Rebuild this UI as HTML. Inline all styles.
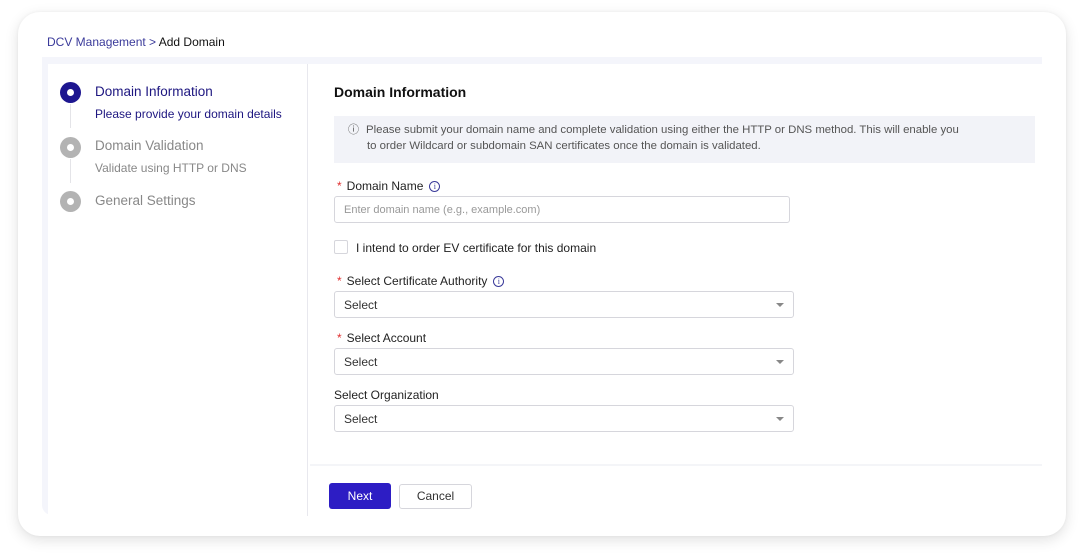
<!DOCTYPE html>
<html><head><meta charset="utf-8"><style>
*{box-sizing:border-box;margin:0;padding:0}
body{width:1084px;height:560px;background:#fff;font-family:"Liberation Sans",sans-serif;position:relative;overflow:hidden;color:#222}
.card{position:absolute;left:18px;top:12px;width:1048px;height:524px;background:#fff;border-radius:22px;box-shadow:0 4px 14px rgba(0,0,0,0.12),0 0 3px rgba(0,0,0,0.05)}
.abs{position:absolute}
.bc{left:47px;top:35px;font-size:12px;color:#3a3a9a}
.bc b{font-weight:normal;color:#111}
.panel{left:42px;top:57px;width:1000px;height:458px;background:#f4f5fb;border-radius:0 0 0 10px}
.leftw{left:48px;top:64px;width:259px;height:452px;background:#fff}
.right{left:308px;top:64px;width:734px;height:452px;background:#fff}
.vline{left:307px;top:64px;width:1px;height:452px;background:#e8e8ee}
.dot{width:21px;height:21px;border-radius:50%;}
.dot::after{content:"";position:absolute;left:7px;top:7px;width:7px;height:7px;border-radius:50%;background:#fff}
.t1{font-size:13.5px}
.t2{font-size:12px}
.lbl{font-size:12px;color:#222}
.lbl i{color:#e03030;font-style:normal;margin-right:5px}
.info{display:inline-block;width:11px;height:11px;border:1px solid #3a3a9a;border-radius:50%;font-size:8px;color:#3a3a9a;text-align:center;line-height:10px;margin-left:6px;vertical-align:1px;font-family:"Liberation Serif",serif}
.inp{width:456px;height:27px;border:1px solid #d6d6dc;border-radius:3px;background:#fff;font-size:12px;color:#333;padding:6px 9px}
.arrow{position:absolute;right:9px;top:11px;border-left:4px solid transparent;border-right:4px solid transparent;border-top:4px solid #888}
</style></head><body>
<div class="card"></div>
<div class="abs bc">DCV Management &gt; <b>Add Domain</b></div>
<div class="abs panel"></div>
<div class="abs leftw"></div>
<div class="abs right"></div>
<div class="abs vline"></div>

<div class="abs dot" style="left:60px;top:82px;background:#1d1690"></div>
<div class="abs" style="left:70px;top:104px;width:1px;height:24px;background:#e4e4e8"></div>
<div class="abs dot" style="left:60px;top:137px;background:#b3b3b3"></div>
<div class="abs" style="left:70px;top:159px;width:1px;height:24px;background:#e4e4e8"></div>
<div class="abs dot" style="left:60px;top:191px;background:#b3b3b3"></div>
<div class="abs t1" style="left:95px;top:84px;color:#1d1680">Domain Information</div>
<div class="abs t2" style="left:95px;top:107px;color:#1d1680">Please provide your domain details</div>
<div class="abs t1" style="left:95px;top:138px;color:#888">Domain Validation</div>
<div class="abs t2" style="left:95px;top:161px;color:#888">Validate using HTTP or DNS</div>
<div class="abs t1" style="left:95px;top:193px;color:#888">General Settings</div>

<div class="abs" style="left:334px;top:84px;font-size:14px;font-weight:bold;color:#111">Domain Information</div>
<div class="abs" style="left:334px;top:116px;width:701px;height:47px;background:#f2f3f8;font-size:11.4px;color:#555;padding:7px 0 0 14px;line-height:15.5px">
<span style="font-size:11px;margin-right:7px">ⓘ</span>Please submit your domain name and complete validation using either the HTTP or DNS method. This will enable you<br><span style="padding-left:19px">to order Wildcard or subdomain SAN certificates once the domain is validated.</span></div>

<div class="abs lbl" style="left:337px;top:179px"><i>*</i>Domain Name<span class="info">i</span></div>
<div class="abs inp" style="left:334px;top:196px;color:#999;font-size:11px;padding-top:7px">Enter domain name (e.g., example.com)</div>

<div class="abs" style="left:334px;top:240px;width:14px;height:14px;border:1px solid #d6d6dc;border-radius:2px;background:#fff"></div>
<div class="abs lbl" style="left:356px;top:241px">I intend to order EV certificate for this domain</div>

<div class="abs lbl" style="left:337px;top:274px"><i>*</i>Select Certificate Authority<span class="info">i</span></div>
<div class="abs inp" style="left:334px;top:291px;width:460px">Select<span class="arrow"></span></div>
<div class="abs lbl" style="left:337px;top:331px"><i>*</i>Select Account</div>
<div class="abs inp" style="left:334px;top:348px;width:460px">Select<span class="arrow"></span></div>
<div class="abs lbl" style="left:334px;top:388px">Select Organization</div>
<div class="abs inp" style="left:334px;top:405px;width:460px">Select<span class="arrow"></span></div>

<div class="abs" style="left:310px;top:464px;width:732px;height:2px;background:#f4f5f8"></div>
<div class="abs" style="left:329px;top:483px;width:62px;height:26px;background:#2d1dc4;border-radius:3px;color:#fff;font-size:12px;text-align:center;line-height:26px">Next</div>
<div class="abs" style="left:399px;top:484px;width:73px;height:25px;border:1px solid #d6d6dc;border-radius:3px;background:#fff;font-size:12px;text-align:center;line-height:23px;color:#333">Cancel</div>
</body></html>
